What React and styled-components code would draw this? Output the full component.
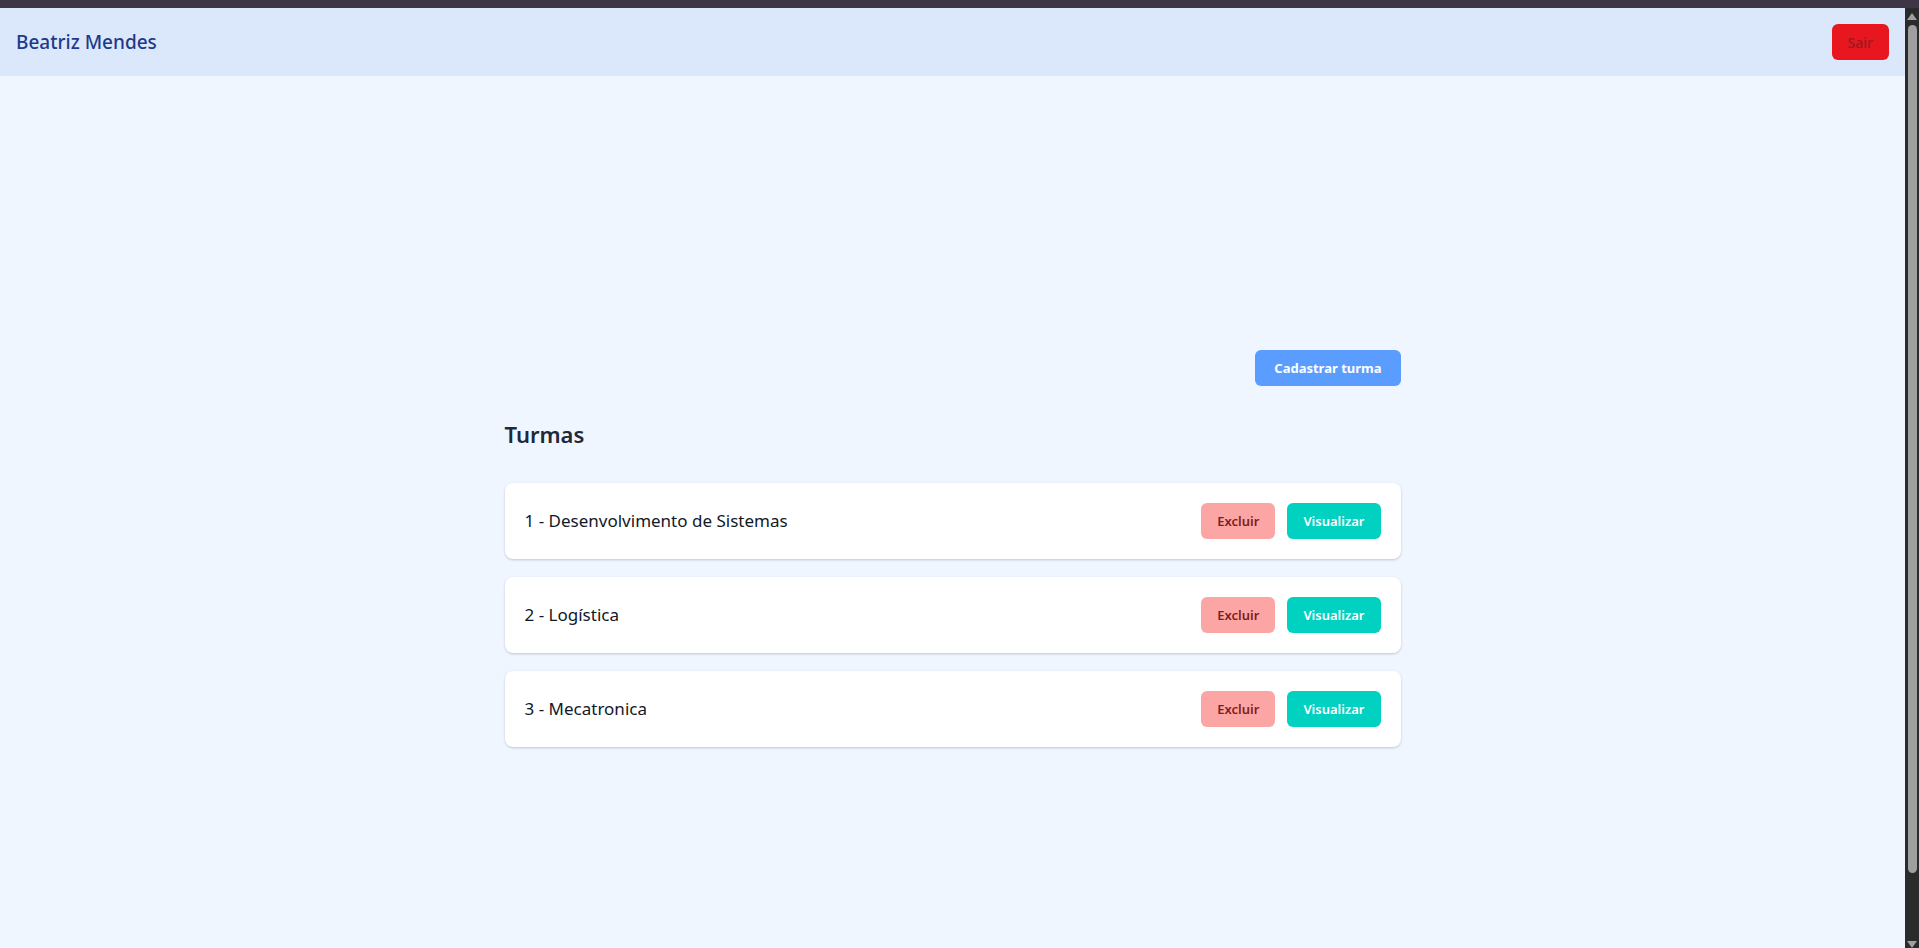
import React from "react";
import styled, { createGlobalStyle } from "styled-components";

const GlobalStyle = createGlobalStyle`
  html, body {
    margin: 0;
    padding: 0;
    height: 100%;
    overflow: hidden;
  }

  body {
    background: #eff6ff;
    font-family: "Noto Sans", "Open Sans", sans-serif;
    color: #111827;
  }
`;

const Frame = styled.div`
  height: 100vh;
  display: flex;
  flex-direction: column;
`;

const TopStrip = styled.div`
  flex: none;
  height: 8px;
  background: #3e3647;
`;

const Window = styled.div`
  flex: 1;
  min-height: 0;
  display: flex;
`;

const Viewport = styled.div`
  flex: 1;
  min-width: 0;
  overflow: hidden;
  background: #eff6ff;
`;

/* browser scrollbar as it shows in the screenshot */
const ScrollRail = styled.div`
  flex: none;
  width: 14px;
  display: flex;
  flex-direction: column;
  align-items: center;
  padding-top: 5px;
  background: #2b2b2b;
`;

const Arrow = styled.span`
  width: 0;
  height: 0;
  border-left: 5px solid transparent;
  border-right: 5px solid transparent;
  ${(p) =>
    p.$down
      ? "border-top: 7px solid #9f9f9f; margin-top: auto;"
      : "border-bottom: 7px solid #9f9f9f; margin-bottom: 5px;"}
`;

const Thumb = styled.span`
  width: 9px;
  height: 848px;
  border-radius: 5px;
  background: #9f9f9f;
`;

const Header = styled.header`
  height: 68px;
  display: flex;
  align-items: center;
  justify-content: space-between;
  padding: 0 16px;
  background: #dbe8fc;
`;

const UserName = styled.h1`
  margin: 0;
  font-size: 19px;
  font-weight: 500;
  color: #1e3a8a;
`;

const Button = styled.button`
  height: 36px;
  padding: 0 ${(p) => p.$pad || 16}px;
  border: none;
  border-radius: 6px;
  font-family: inherit;
  font-size: ${(p) => p.$size || 13}px;
  font-weight: ${(p) => p.$weight || 600};
  background: ${(p) => p.$bg};
  color: ${(p) => p.$color};
  cursor: pointer;
`;

const Main = styled.main`
  min-height: 944px;
  display: flex;
  align-items: center;
  justify-content: center;
`;

const Container = styled.section`
  width: 100%;
  max-width: 896px;
`;

const ActionBar = styled.div`
  display: flex;
  justify-content: flex-end;
  margin-bottom: 32px;
`;

const Title = styled.h2`
  margin: 0 0 33px;
  font-size: 22px;
  line-height: 32px;
  font-weight: 600;
  color: #1f2937;
`;

const List = styled.ul`
  list-style: none;
  margin: 0;
  padding: 0;
  display: flex;
  flex-direction: column;
  gap: 18px;
`;

const Card = styled.li`
  display: flex;
  align-items: center;
  justify-content: space-between;
  padding: 20px;
  background: #ffffff;
  border-radius: 8px;
  box-shadow: 0 1px 3px rgba(0, 0, 0, 0.12), 0 1px 2px rgba(0, 0, 0, 0.08);
`;

const CardName = styled.span`
  font-size: 17px;
  color: #111827;
`;

const Actions = styled.div`
  display: flex;
  gap: 12px;
`;

const turmas = [
  { id: 1, nome: "Desenvolvimento de Sistemas" },
  { id: 2, nome: "Logística" },
  { id: 3, nome: "Mecatronica" },
];

export default function App() {
  return (
    <>
      <GlobalStyle />
      <Frame>
        <TopStrip />
        <Window>
          <Viewport>
            <Header>
              <UserName>Beatriz Mendes</UserName>
              <Button $bg="#e8161f" $color="#961b22" $size={14} $weight={500}>
                Sair
              </Button>
            </Header>
            <Main>
              <Container>
                <ActionBar>
                  <Button $bg="#5b9dff" $color="#ffffff" $size={13} $weight={700} $pad={19}>
                    Cadastrar turma
                  </Button>
                </ActionBar>
                <Title>Turmas</Title>
                <List>
                  {turmas.map((t) => (
                    <Card key={t.id}>
                      <CardName>
                        {t.id} - {t.nome}
                      </CardName>
                      <Actions>
                        <Button $bg="#fca5a5" $color="#7f1d1d">
                          Excluir
                        </Button>
                        <Button $bg="#00d1c0" $color="#ffffff">
                          Visualizar
                        </Button>
                      </Actions>
                    </Card>
                  ))}
                </List>
              </Container>
            </Main>
          </Viewport>
          <ScrollRail>
            <Arrow />
            <Thumb />
            <Arrow $down />
          </ScrollRail>
        </Window>
      </Frame>
    </>
  );
}
